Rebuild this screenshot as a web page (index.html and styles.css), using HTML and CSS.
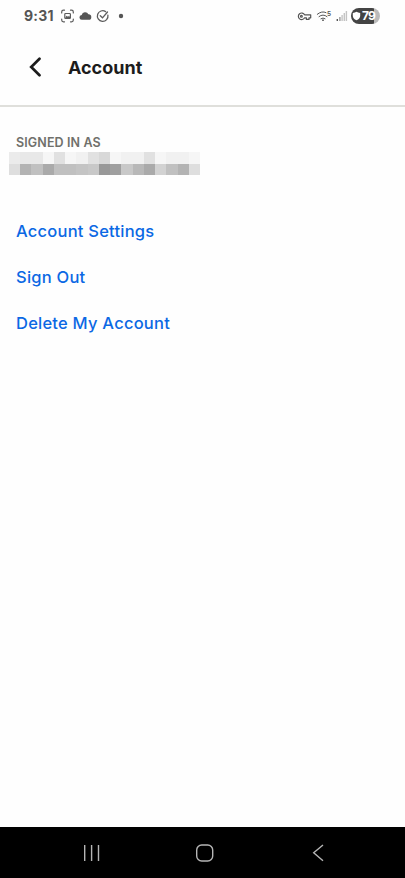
FILE: index.html
```html
<!DOCTYPE html>
<html lang="en">
<head>
<meta charset="utf-8">
<title>Account</title>
<link rel="stylesheet" href="styles.css">
</head>
<body>
<div class="status">
  <span class="time">9:31</span>
  <svg class="status-left" width="66" height="16" viewBox="60 8 66 16" fill="none" stroke="#5c5c5c" stroke-width="1.200" stroke-linecap="round">
    <path d="M61.700 13v-1q0-1.800 1.800-1.800h1M70.500 10.200h1q1.800 0 1.800 1.800v1M61.700 19v1q0 1.800 1.800 1.800h1M70.500 21.800h1q1.800 0 1.800-1.800v-1"/>
    <rect x="64.800" y="13.500" width="5.600" height="5" rx=".8"/>
    <path d="M65 18.200l1.500-2.500 1.500 1 1-1 1.200 1.500v1z" fill="#5c5c5c" stroke="none"/>
    <path d="M82 19.800a2.400 2.400 0 0 1-.3-4.800 3.600 3.600 0 0 1 6.700-.8 2.800 2.800 0 0 1 .2 5.600z" fill="#555" stroke="none"/>
    <path d="M107.900 15.100a5.300 5.300 0 1 1-2.300-3.500M100.300 15.700l2.200 2.100 5-5.800" stroke-width="1.300"/>
    <circle cx="121" cy="16" r="2.200" fill="#555" stroke="none"/>
  </svg>
  <svg class="status-right" width="52" height="16" viewBox="296 8 52 16" fill="none" stroke="#555" stroke-width="1.200">
    <path d="M304.600 14.800a3.300 3.300 0 1 0 0 3h1.800v1.600h2.600v-1.600h1.700v-3z" stroke-linejoin="round"/>
    <circle cx="301.400" cy="16.300" r=".9"/>
    <path d="M317.300 14.300q4.500-3.800 8.700-1.700M319 16.600q4-3.200 8 0M320.900 18.700q2.100-1.500 4.200 0" stroke-width="1" stroke-linecap="round"/>
    <circle cx="323" cy="20.200" r=".9" fill="#555" stroke="none"/>
    <text x="327" y="15.800" class="band">5</text>
    <path d="M337.300 19v2" stroke-width="1.400"/>
    <path d="M339.900 17v4" stroke="#888" stroke-width="1.200"/>
    <path d="M342.100 15v6M344.300 13v8M346.400 11v10" stroke="#c4c4c4" stroke-width="1.400"/>
  </svg>
  <div class="battery">
    <svg width="9" height="10" viewBox="0 0 9 10"><path d="M4.500 .8Q6 1.800 8.200 1.900v3Q8 7.800 4.500 9.200 1 7.800 .8 4.900v-3Q3 1.800 4.500.8z" fill="#fff"/></svg>
    <span>79</span>
  </div>
</div>
<header class="header">
  <svg class="back" width="14" height="20" viewBox="0 0 14 20"><path d="M11.500 1.700L3.200 10l8.300 8.300" fill="none" stroke="#1c1c1c" stroke-width="2.700" stroke-linecap="round" stroke-linejoin="miter"/></svg>
  <h1>Account</h1>
</header>
<main class="content">
  <h2>SIGNED IN AS</h2>
  <div class="mosaic">
    <i class="g-eb"></i><i class="g-e5"></i><i class="g-e5"></i><i class="g-f4"></i><i class="g-e1"></i><i class="g-f4"></i><i class="g-f0"></i><i class="g-e1"></i><i class="g-d8"></i><i class="g-f4"></i><i class="g-f0"></i><i class="g-f0"></i><i class="g-e1"></i><i class="g-f4"></i><i class="g-f0"></i><i class="g-f0"></i><i class="g-f4"></i>
    <i class="g-de"></i><i class="g-b3"></i><i class="g-c0"></i><i class="g-aa"></i><i class="g-c0"></i><i class="g-c0"></i><i class="g-c4"></i><i class="g-c8"></i><i class="g-98"></i><i class="g-9f"></i><i class="g-c8"></i><i class="g-b8"></i><i class="g-aa"></i><i class="g-d2"></i><i class="g-c0"></i><i class="g-b3"></i><i class="g-de"></i>
  </div>
  <nav class="links">
    <a class="link settings">Account Settings</a>
    <a class="link signout">Sign Out</a>
    <a class="link delete">Delete My Account</a>
  </nav>
</main>
<footer class="navbar">
  <svg width="405" height="51" viewBox="0 827 405 51" fill="none" stroke="#b5b5b5" stroke-width="1.400">
    <path d="M84.700 845v16M91.600 845v16M98.500 845v16"/>
    <rect x="196.700" y="845" width="16" height="16" rx="5"/>
    <path d="M323 845l-9.300 7.800 9.300 8"/>
  </svg>
</footer>
</body>
</html>
```
FILE: styles.css
```css
* { box-sizing: border-box; }
body {
  margin: 0;
  height: 878px;
  display: flex;
  flex-direction: column;
  background: #fefefe;
  font-family: Inter, "Liberation Sans", sans-serif;
  overflow: hidden;
}
.status {
  height: 32px;
  display: flex;
  align-items: center;
  padding-left: 24px;
  color: #555;
}
.time {
  width: 36px;
  font: 700 14px/16px Inter, sans-serif;
  letter-spacing: 0.2px;
  white-space: nowrap;
}
.status-right { margin-left: 170px; }
.band {
  font: 600 6.5px Inter, sans-serif;
  fill: #555;
  stroke: none;
}
.battery {
  width: 29px;
  height: 16px;
  margin-left: 3px;
  padding-left: 1px;
  display: flex;
  align-items: center;
  border-radius: 8px;
  background: linear-gradient(90deg, #444 80%, #bbb 80%);
  color: #fff;
  font: 700 12px/16px Inter, sans-serif;
  letter-spacing: -0.8px;
}
.battery svg { flex: none; margin-right: 1px; }
.header {
  height: 75px;
  display: flex;
  align-items: center;
  padding: 0 0 2px 28px;
  border-bottom: 2px solid #dfdfdb;
}
.back { margin-bottom: 2px; }
.header h1 {
  margin: 0 0 0 26px;
  font-size: 18px;
  line-height: 24px;
  font-weight: 700;
  color: #1c1c1c;
}
.content {
  flex: 1;
  padding-top: 28px;
}
.content h2 {
  margin: 0 0 1px 16px;
  font-size: 12.5px;
  line-height: 16px;
  font-weight: 600;
  letter-spacing: 0.12px;
  color: #70706b;
}
.mosaic {
  width: 191px;
  height: 23px;
  margin-left: 9px;
  display: grid;
  grid-template-columns: repeat(17, 1fr);
  grid-template-rows: 12px 11px;
}
.g-f4 { background: #f6f6f6; }
.g-f0 { background: #f1f1f1; }
.g-eb { background: #ebebeb; }
.g-e5 { background: #e8e8e8; }
.g-e1 { background: #e1e1e1; }
.g-de { background: #dedede; }
.g-d8 { background: #d8d8d8; }
.g-d2 { background: #d2d2d2; }
.g-c8 { background: #c8c8c8; }
.g-c4 { background: #c4c4c4; }
.g-c0 { background: #c0c0c0; }
.g-b8 { background: #b8b8b8; }
.g-b3 { background: #b3b3b3; }
.g-aa { background: #aaa; }
.g-9f { background: #9f9f9f; }
.g-98 { background: #989898; }
.links {
  display: flex;
  flex-direction: column;
  align-items: flex-start;
  gap: 22.200px;
  padding: 44px 0 0 16px;
}
.link {
  font-size: 16.5px;
  line-height: 24px;
  font-weight: 450;
  letter-spacing: 0.23px;
  color: #0b68e4;
}
.navbar {
  height: 51px;
  background: #000;
}
.navbar svg { display: block; }
```
